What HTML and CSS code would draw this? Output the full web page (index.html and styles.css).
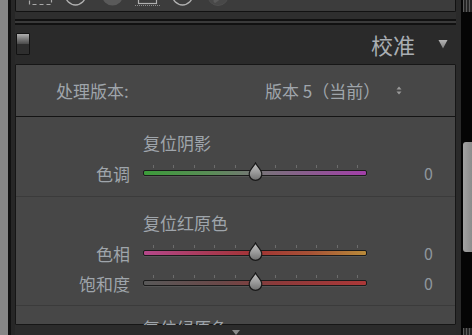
FILE: index.html
```html
<!DOCTYPE html>
<html lang="zh-CN">
<head>
<meta charset="UTF-8">
<title>校准</title>
<link rel="stylesheet" href="styles.css">
</head>
<body>
    <svg class="defs" width="0" height="0">
        <defs>
            <linearGradient id="knob" x1="0" y1="0" x2="0" y2="1">
                <stop offset="0" stop-color="#c4c4c4"/>
                <stop offset="0.55" stop-color="#999"/>
                <stop offset="1" stop-color="#707070"/>
            </linearGradient>
        </defs>
    </svg>

    <div class="app">
        <div class="edge"></div>
        <div class="gutter"></div>

        <div class="column">
            <div class="toolbar">
                <svg width="439" height="12" viewBox="0 0 439 12">
                    <rect x="13.5" y="-14.5" width="22" height="19" fill="none" stroke="#a8a8a8" stroke-width="1.2" stroke-dasharray="4 3"/>
                    <circle cx="59.5" cy="-5" r="10" fill="none" stroke="#b0b0b0" stroke-width="1.4"/>
                    <circle cx="96.5" cy="-5" r="10.5" fill="#5a5a5a"/>
                    <rect x="122.5" y="-14.5" width="18" height="18" fill="none" stroke="#b0b0b0" stroke-width="1.2"/>
                    <line x1="119" y1="5.5" x2="144" y2="5.5" stroke="#8a8a8a" stroke-width="1" stroke-dasharray="1 1"/>
                    <circle cx="166.5" cy="-5" r="10" fill="none" stroke="#b0b0b0" stroke-width="1.4"/>
                    <circle cx="202" cy="-5" r="10.5" fill="#484848" stroke="#4e4e4e"/>
                    <path d="M198 2 L205 -3" stroke="#5a5a5a" stroke-width="3"/>
                </svg>
            </div>
            <div class="spacer"></div>
            <div class="rule"></div>

            <div class="panel-head">
                <span class="toggle"></span>
                <span class="panel-title">校准</span>
                <svg class="collapse" width="10" height="10" viewBox="0 0 10 10">
                    <defs>
                        <linearGradient id="tri" x1="0" y1="0" x2="0" y2="1">
                            <stop offset="0" stop-color="#b4b4b4"/>
                            <stop offset="1" stop-color="#7c7c7c"/>
                        </linearGradient>
                    </defs>
                    <path d="M0.5 1 L9.5 1 L5 9.5 Z" fill="url(#tri)"/>
                </svg>
            </div>

            <div class="panel-body">
                <div class="version-row">
                    <span class="version-label">处理版本:</span>
                    <span class="version-value">版本 5（当前）</span>
                    <svg class="stepper" width="6" height="9" viewBox="0 0 6 9">
                        <path d="M0.5 3.5 L3 0.5 L5.5 3.5 Z M0.5 5.5 L3 8.5 L5.5 5.5 Z" fill="#9a9a9a"/>
                    </svg>
                </div>

                <div class="section">
                    <div class="section-title">复位阴影</div>
                    <div class="slider-row">
                        <span class="slider-label">色调</span>
                        <div class="track tone">
                            <svg class="thumb" width="15" height="19" viewBox="0 0 15 19"><path d="M7.5 1 C8.8 4 13.8 8 13.8 12 A6.3 6.3 0 0 1 1.2 12 C1.2 8 6.2 4 7.5 1 Z" fill="url(#knob)" stroke="#181818" stroke-width="1.2"/></svg>
                        </div>
                        <span class="slider-value">0</span>
                    </div>
                </div>

                <div class="section">
                    <div class="section-title">复位红原色</div>
                    <div class="slider-row">
                        <span class="slider-label">色相</span>
                        <div class="track hue">
                            <svg class="thumb" width="15" height="19" viewBox="0 0 15 19"><path d="M7.5 1 C8.8 4 13.8 8 13.8 12 A6.3 6.3 0 0 1 1.2 12 C1.2 8 6.2 4 7.5 1 Z" fill="url(#knob)" stroke="#181818" stroke-width="1.2"/></svg>
                        </div>
                        <span class="slider-value">0</span>
                    </div>
                    <div class="slider-row">
                        <span class="slider-label">饱和度</span>
                        <div class="track sat">
                            <svg class="thumb" width="15" height="19" viewBox="0 0 15 19"><path d="M7.5 1 C8.8 4 13.8 8 13.8 12 A6.3 6.3 0 0 1 1.2 12 C1.2 8 6.2 4 7.5 1 Z" fill="url(#knob)" stroke="#181818" stroke-width="1.2"/></svg>
                        </div>
                        <span class="slider-value">0</span>
                    </div>
                </div>

                <div class="section last">
                    <div class="section-title">复位绿原色</div>
                </div>
            </div>

            <div class="panel-foot">
                <svg width="8" height="5" viewBox="0 0 8 5"><path d="M0 0 L8 0 L4 5 Z" fill="#8a8a8a"/></svg>
            </div>
        </div>

        <div class="side-gap"></div>
        <div class="scrollbar">
            <div class="scroll-cap"></div>
            <div class="scroll-thumb"></div>
            <div class="scroll-cap bottom"></div>
        </div>
    </div>
</body>
</html>
```

FILE: styles.css
```css
body {
    margin: 0;
    padding: 0;
    background-color: #262626;
    font-family: 'Noto Sans CJK SC', 'Noto Sans', sans-serif;
    overflow: hidden;
}

.defs {
    position: absolute;
}

.app {
    display: flex;
    width: 472px;
    height: 335px;
    overflow: hidden;
}

.edge {
    width: 8px;
    background-color: #868686;
}

.gutter {
    width: 3px;
    background-color: #111;
    border-right: 4px solid #272727;
}

.column {
    width: 441px;
    display: flex;
    flex-direction: column;
    background-color: #2a2a2a;
}

/* toolbar, only its lower edge is visible */
.toolbar {
    height: 12px;
    background-color: #3c3c3c;
    border: 1px solid #121212;
    border-top: none;
    border-radius: 0 0 2px 2px;
    overflow: hidden;
}

.toolbar svg {
    display: block;
}

.spacer {
    height: 7px;
    background-color: #2e2e2e;
}

.rule {
    height: 2px;
    background-color: #3a3a3a;
    border-top: 2px solid #111;
    border-bottom: 2px solid #111;
}

.panel-head {
    height: 41px;
    display: flex;
    align-items: center;
    background-color: #2a2a2a;
    padding-left: 1px;
}

.toggle {
    width: 12px;
    height: 20px;
    border: 1px solid #121212;
    background: linear-gradient(#b0b0b0, #7a7a7a 25%, #4a4a4a 50%, #2e2e2e 52%, #2e2e2e);
    border-radius: 1px;
}

.panel-title {
    margin-left: auto;
    font-size: 22px;
    line-height: 26px;
    color: #a9aeb3;
}

.collapse {
    display: block;
    margin: 0 8px 0 23px;
}

.panel-body {
    height: 261px;
    box-sizing: border-box;
    background-color: #474747;
    border: 1px solid #161616;
    border-radius: 1px;
}

.version-row {
    height: 51px;
    display: flex;
    align-items: center;
    padding-left: 40px;
    border-bottom: 1px solid #141414;
    color: #9fa5ab;
    font-size: 17px;
}

.version-label {
    width: 209px;
}

.stepper {
    display: block;
    margin-left: 16px;
}

.section {
    padding: 16px 0 8px;
    border-top: 1px solid #3b3b3b;
}

.section:nth-child(2) {
    border-top: none;
}

.section:nth-child(3) {
    padding-bottom: 7px;
}

.section.last {
    padding-top: 12px;
}

.section-title {
    padding-left: 127px;
    font-size: 17px;
    line-height: 20px;
    color: #9fa5ab;
}

.section-title + .slider-row {
    margin-top: 5px;
}

.slider-row {
    height: 30px;
    display: flex;
    align-items: center;
}

.slider-label {
    width: 114px;
    text-align: right;
    font-size: 17px;
    color: #9fa5ab;
}

.slider-value {
    width: 66px;
    text-align: right;
    font-size: 16px;
    color: #8e969d;
}

.track {
    position: relative;
    width: 222px;
    height: 4px;
    margin-left: 13px;
    border: 1px solid #1b1b1b;
    border-radius: 2px;
    box-shadow: 0 1px 0 #555;
}

.track::before {
    content: "";
    position: absolute;
    left: 9px;
    top: -6px;
    width: 205px;
    height: 3px;
    background: repeating-linear-gradient(90deg, #6c6c6c 0 1px, transparent 1px 20.4px);
}

.track.tone {
    background: linear-gradient(90deg, #3c9b3a 0%, #5a8c57 30%, #767676 50%, #86618a 70%, #a23fa8 100%);
}

.track.hue {
    background: linear-gradient(90deg, #b4488a 0%, #a83a55 30%, #a23434 50%, #a65236 75%, #b88a3a 100%);
}

.track.sat {
    background: linear-gradient(90deg, #585858 0%, #6a4848 35%, #8c3a3a 60%, #ab3838 100%);
}

.thumb {
    position: absolute;
    left: 104px;
    top: -9px;
    display: block;
}

.panel-foot {
    flex: 1;
    display: flex;
    justify-content: center;
    padding-top: 5px;
    background-color: #2b2b2b;
}

.panel-foot svg {
    display: block;
}

.side-gap {
    width: 5px;
    background-color: #2a2a2a;
}

.scrollbar {
    width: 11px;
    display: flex;
    flex-direction: column;
    background-color: #050505;
}

.scroll-cap {
    height: 12px;
    margin-left: 2px;
    background: repeating-linear-gradient(90deg, #5a5a5a 0 1px, #262626 1px 3px);
}

.scroll-cap.bottom {
    height: 7px;
    margin-top: auto;
}

.scroll-thumb {
    height: 110px;
    margin: 130px 0 0 2px;
    border-radius: 3px 0 0 3px;
    background: linear-gradient(90deg, #a3a3a3, #8c8c8c);
}
```
